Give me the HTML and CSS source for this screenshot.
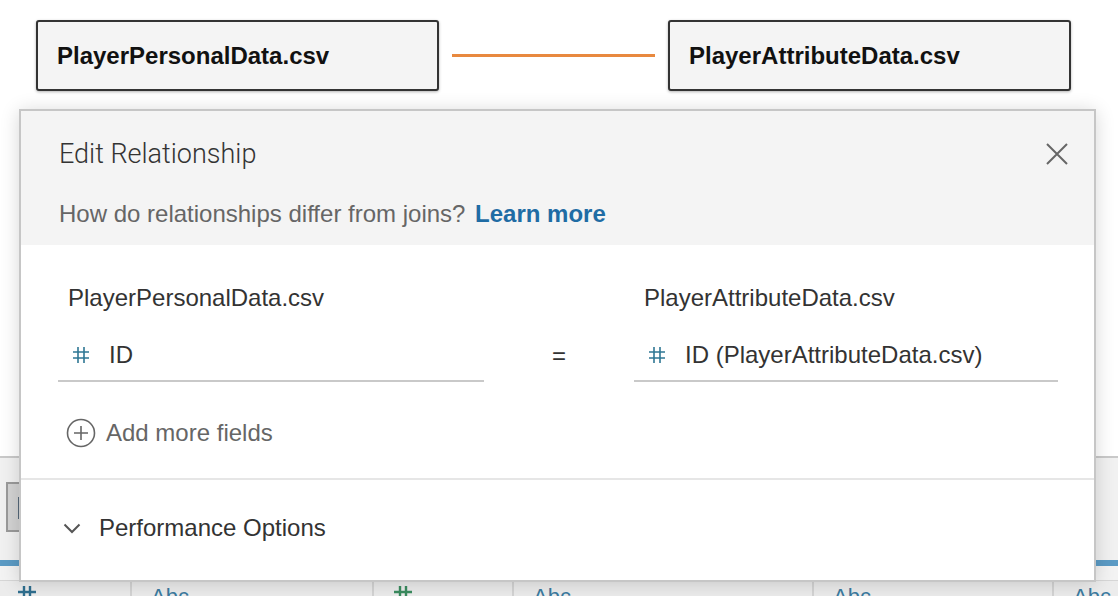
FILE: index.html
```html
<!DOCTYPE html>
<html>
<head>
<meta charset="utf-8">
<link rel="stylesheet" href="styles.css">
</head>
<body>
<div class="app">
  <div class="canvas">
    <div class="table-box">PlayerPersonalData.csv</div>
    <div class="link"></div>
    <div class="table-box">PlayerAttributeData.csv</div>
  </div>
  <div class="lower">
    <div class="toolbar">
      <div class="tool-btn"><span class="tool-mark"></span></div>
    </div>
    <div class="blue-line"></div>
    <div class="gap-strip"></div>
    <div class="grid-header">
      <div class="col c1"><svg class="type-hash" width="20" height="20" viewBox="0 0 20 20"><path d="M7 1V20M13 1V20M1 7H19M1 13H19" stroke="#2f6f8f" stroke-width="2.4" fill="none"/></svg></div>
      <div class="col c2"><span class="abc">Abc</span></div>
      <div class="col c3"><svg class="type-hash" width="20" height="20" viewBox="0 0 20 20"><path d="M7 1V20M13 1V20M1 7H19M1 13H19" stroke="#3a8c5f" stroke-width="2.4" fill="none"/></svg></div>
      <div class="col c4"><span class="abc">Abc</span></div>
      <div class="col c5"><span class="abc">Abc</span></div>
      <div class="col c6"><span class="abc">Abc</span></div>
    </div>
  </div>

  <div class="dialog">
    <div class="dlg-head">
      <div class="dlg-title">Edit Relationship</div>
      <div class="dlg-sub">How do relationships differ from joins? <a class="learn">Learn more</a></div>
      <svg class="close" width="22" height="22" viewBox="0 0 22 22"><path d="M1 1L21 21M21 1L1 21" stroke="#666" stroke-width="2" fill="none"/></svg>
    </div>
    <div class="dlg-body">
      <div class="rel-grid">
        <div class="src-label">PlayerPersonalData.csv</div>
        <div></div>
        <div class="src-label">PlayerAttributeData.csv</div>
        <div class="field">
          <svg class="hash" width="16" height="16" viewBox="0 0 16 16"><path d="M5 0V16M11 0V16M0 5H16M0 11H16" stroke="#2f7794" stroke-width="1.6" fill="none"/></svg>
          <span class="field-name">ID</span>
        </div>
        <div class="equals">=</div>
        <div class="field">
          <svg class="hash" width="16" height="16" viewBox="0 0 16 16"><path d="M5 0V16M11 0V16M0 5H16M0 11H16" stroke="#2f7794" stroke-width="1.6" fill="none"/></svg>
          <span class="field-name">ID (PlayerAttributeData.csv)</span>
        </div>
      </div>
      <div class="add-more">
        <svg class="plus" width="30" height="30" viewBox="0 0 30 30"><circle cx="15" cy="15" r="13.5" stroke="#666" stroke-width="1.6" fill="none"/><path d="M15 8V22M8 15H22" stroke="#666" stroke-width="1.6" fill="none"/></svg>
        <span>Add more fields</span>
      </div>
    </div>
    <div class="dlg-foot">
      <svg class="chev" width="18" height="12" viewBox="0 0 18 12"><path d="M1.5 2.5L9 10L16.5 2.5" stroke="#555" stroke-width="2" fill="none"/></svg>
      <span>Performance Options</span>
    </div>
  </div>
</div>
</body>
</html>
```

FILE: styles.css
```css
* { box-sizing: border-box; }
html, body {
  margin: 0;
  padding: 0;
  width: 1118px;
  height: 596px;
  overflow: hidden;
  background: #fff;
  font-family: "Liberation Sans", Arial, sans-serif;
}
.app {
  position: relative;
  width: 1118px;
  height: 596px;
  overflow: hidden;
}
.canvas {
  height: 456px;
  padding: 20px 0 0 36px;
  display: flex;
  align-items: flex-start;
  background: #fff;
}
.table-box {
  width: 403px;
  height: 71px;
  background: #f4f4f4;
  border: 2px solid #333;
  border-radius: 3px;
  box-shadow: 0 1px 3px rgba(0,0,0,0.3);
  display: flex;
  align-items: center;
  padding-left: 19px;
  font-weight: bold;
  font-size: 24px;
  color: #111;
}
.link {
  width: 203px;
  height: 3px;
  margin: 34px 13px 0;
  background: #e8893f;
}
.lower {
  border-top: 2px solid #c9c9c9;
  background: #f1f1f1;
}
.toolbar {
  height: 102px;
  padding: 24px 0 0 6px;
}
.tool-btn {
  width: 40px;
  height: 50px;
  border: 2px solid #9a9a9a;
  background: #d3d3d3;
  position: relative;
}
.tool-mark {
  position: absolute;
  left: 10px;
  top: 13px;
  width: 3px;
  height: 22px;
  background: #56687a;
}
.blue-line {
  height: 6px;
  background: #5b9bc5;
}
.gap-strip {
  height: 14px;
  background: #f3f3f3;
}
.grid-header {
  display: flex;
  height: 40px;
  background: #ececec;
  border-top: 1px solid #d6d6d6;
}
.col {
  border-right: 2px solid #d4d4d4;
  padding: 4px 0 0 17px;
}
.c1 { width: 132px; }
.c2 { width: 242px; padding-left: 19px; }
.c3 { width: 140px; padding-left: 19px; }
.c4 { width: 300px; padding-left: 19px; }
.c5 { width: 240px; padding-left: 19px; }
.c6 { flex: 1; padding-left: 19px; border-right: none; }
.type-hash { display: block; }
.abc {
  display: block;
  font-size: 22px;
  line-height: 22px;
  margin-top: 1px;
  color: #3b7ba0;
}

.dialog {
  position: absolute;
  left: 19px;
  top: 109px;
  width: 1077px;
  height: 473px;
  background: #fff;
  border: 2px solid #c6c6c6;
  box-shadow: 0 2px 18px rgba(0,0,0,0.16);
  display: flex;
  flex-direction: column;
}
.dlg-head {
  position: relative;
  height: 134px;
  background: #f4f4f4;
  padding: 28px 38px 0;
}
.dlg-title {
  font-family: Roboto, "Liberation Sans", sans-serif;
  font-weight: 300;
  font-size: 27px;
  line-height: 30px;
  color: #333;
}
.dlg-sub {
  margin-top: 30px;
  font-size: 24px;
  line-height: 30px;
  color: #666;
}
.learn {
  font-weight: bold;
  color: #1f6ca4;
  margin-left: 3px;
}
.close {
  position: absolute;
  right: 26px;
  top: 32px;
}
.dlg-body {
  height: 235px;
  border-bottom: 2px solid #e6e6e6;
  padding: 38px 36px 0 37px;
}
.rel-grid {
  display: grid;
  grid-template-columns: 426px 150px 424px;
  row-gap: 19px;
}
.src-label {
  font-size: 24px;
  line-height: 30px;
  color: #333;
  padding-left: 10px;
}
.field {
  height: 50px;
  border-bottom: 2px solid #c9c9c9;
  display: flex;
  align-items: center;
  padding: 0 0 2px 15px;
  gap: 20px;
}
.field-name {
  font-size: 24px;
  color: #333;
}
.equals {
  display: flex;
  align-items: center;
  justify-content: center;
  font-size: 24px;
  color: #333;
  padding-bottom: 2px;
}
.add-more {
  margin-top: 36px;
  display: flex;
  align-items: center;
  gap: 10px;
  padding-left: 8px;
  font-size: 24px;
  line-height: 30px;
  color: #666;
}
.dlg-foot {
  flex: 1;
  display: flex;
  align-items: center;
  padding: 0 0 4px 42px;
  gap: 18px;
  font-size: 24px;
  color: #333;
}
```
